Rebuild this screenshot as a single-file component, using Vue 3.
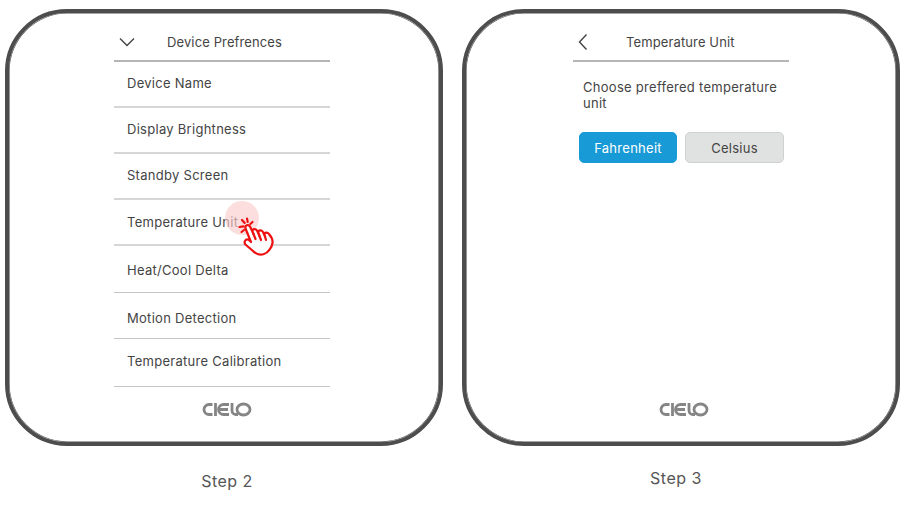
<template>
  <div class="page">
    <section class="step">
      <div class="device">
        <div class="screen screen-list">
          <div class="head">
            <svg class="chevron-down" width="16" height="10" viewBox="0 0 16 10"><path d="M1 1.5 L8 8.5 L15 1.5" /></svg>
            <span class="head-title">Device Prefrences</span>
          </div>
          <div
            v-for="row in rows"
            :key="row.label"
            class="row"
            :class="{ soft: row.soft }"
            :style="{ height: row.height + 'px', paddingTop: row.top + 'px' }"
          >{{ row.label }}</div>
          <div class="tap"></div>
          <svg class="hand" width="46" height="46" viewBox="0 0 46 46">
            <g class="rays">
              <path d="M10 8 L12.7 11" />
              <path d="M15 6.5 L15.7 10" />
              <path d="M20.5 10 L18.3 12" />
              <path d="M7.5 15 L11.5 14.3" />
              <path d="M9.5 20 L12 18" />
            </g>
            <path class="palm" d="M19 30 L13.5 16.5 C12.5 13 16.5 12 18 14.5 L21.5 22 L20.5 19.5 C20 17 23.5 16 25 18.5 L27.5 24 L26.5 20.5 C26 18 29.5 17.5 31 20 L33 24.5 L32.5 22.5 C32.5 20 35.5 20 37 22 C39.5 25 41 28 40.5 31 C40 35 36 41 32 42 C28 43.5 24.5 42.5 21 39 L14 33 C11 30.5 13.5 26 17 28 Z" />
            <g class="rays">
              <path d="M21.5 22 L23.5 27" />
              <path d="M27.5 24 L29 28" />
              <path d="M33 24.5 L34 28" />
            </g>
          </svg>
        </div>
        <svg class="logo" width="50" height="15" viewBox="0 0 50 15">
          <path d="M10.5 2.5 H7 A5 5 0 0 0 7 12.5 H10.5" />
          <path d="M13.5 1 V14" />
          <path d="M27 2.5 H21.5 A5 5 0 0 0 21.5 12.5 H27 M17 7.5 H26" />
          <path d="M30 1 V8.5 A4 4 0 0 0 34 12.5 H36" />
          <ellipse cx="41.5" cy="7.5" rx="6.5" ry="5.5" />
        </svg>
      </div>
      <p class="caption caption-left">Step 2</p>
    </section>

    <section class="step">
      <div class="device">
        <div class="screen">
          <div class="head">
            <svg class="chevron-left" width="10" height="18" viewBox="0 0 10 18"><path d="M8.5 1.5 L1.5 9 L8.5 16.5" /></svg>
            <span class="head-title title-unit">Temperature Unit</span>
          </div>
          <p class="prompt">Choose preffered temperature unit</p>
          <div class="choices">
            <button class="choice choice-on">Fahrenheit</button>
            <button class="choice">Celsius</button>
          </div>
        </div>
        <svg class="logo" width="50" height="15" viewBox="0 0 50 15">
          <path d="M10.5 2.5 H7 A5 5 0 0 0 7 12.5 H10.5" />
          <path d="M13.5 1 V14" />
          <path d="M27 2.5 H21.5 A5 5 0 0 0 21.5 12.5 H27 M17 7.5 H26" />
          <path d="M30 1 V8.5 A4 4 0 0 0 34 12.5 H36" />
          <ellipse cx="41.5" cy="7.5" rx="6.5" ry="5.5" />
        </svg>
      </div>
      <p class="caption caption-right">Step 3</p>
    </section>
  </div>
</template>

<script setup>
// rows are not evenly spaced in the design, so each one keeps its own size
const rows = [
  { label: 'Device Name', height: 46, top: 13, soft: true },
  { label: 'Display Brightness', height: 46, top: 13, soft: true },
  { label: 'Standby Screen', height: 46, top: 13, soft: true },
  { label: 'Temperature Unit', height: 46, top: 14, soft: true },
  { label: 'Heat/Cool Delta', height: 47, top: 16 },
  { label: 'Motion Detection', height: 46, top: 17 },
  { label: 'Temperature Calibration', height: 48, top: 14 },
];
</script>

<style>
html,
body {
  margin: 0;
  background: #fff;
}
</style>

<style scoped>
.page {
  display: flex;
  gap: 19px;
  width: 905px;
  height: 519px;
  padding: 9px 0 0 5px;
  box-sizing: border-box;
  overflow: hidden;
  font-family: 'Inter', 'Open Sans', sans-serif;
  font-size: 13px;
  letter-spacing: 0.28px;
  color: #444;
}

.device {
  display: flex;
  flex-direction: column;
  align-items: center;
  width: 438px;
  height: 437px;
  box-sizing: border-box;
  border: 4px solid #4d4d4d;
  border-radius: 62px;
  box-shadow: inset 0 0 0 0.6px #4d4d4d;
}

.screen {
  position: relative;
  width: 216px;
  height: 374px;
}

.screen-list {
  margin-right: 4px;
}

.head {
  display: flex;
  align-items: center;
  height: 49px;
  box-sizing: border-box;
  border-bottom: 2px solid #b5b5b5;
  padding: 11px 0 0 5px;
}

.head-title {
  margin-left: 32px;
  letter-spacing: 0.12px;
}

.title-unit {
  margin-left: 38px;
}

.chevron-down path,
.chevron-left path {
  fill: none;
  stroke: #444;
  stroke-width: 1.4;
}

.row {
  box-sizing: border-box;
  padding-left: 13px;
  line-height: 16px;
  border-bottom: 1px solid #c4c4c4;
}

.soft {
  border-bottom: 2px solid #d6d6d6;
}

.tap {
  position: absolute;
  left: 111px;
  top: 188px;
  width: 34px;
  height: 34px;
  border-radius: 50%;
  background: rgba(250, 205, 205, 0.65);
}

.hand {
  position: absolute;
  left: 118px;
  top: 199px;
}

.rays path,
.palm {
  fill: none;
  stroke: #ee1111;
  stroke-width: 2.2;
  stroke-linecap: round;
  stroke-linejoin: round;
}

.palm {
  fill: #fff;
}

.logo {
  margin: 15px 0 0 6px;
}

.logo path,
.logo ellipse {
  fill: none;
  stroke: #858585;
  stroke-width: 2.8;
}

.prompt {
  margin: 17px 0 0 10px;
  width: 205px;
  line-height: 16px;
}

.choices {
  display: flex;
  gap: 8px;
  margin: 21px 0 0 6px;
}

.choice {
  width: 98px;
  height: 31px;
  padding: 0;
  border: 1px solid #cfd1d1;
  border-radius: 5px;
  background: #e0e1e1;
  color: #444;
  font: inherit;
  letter-spacing: inherit;
}

.choice + .choice {
  width: 99px;
}

.choice-on {
  border-color: #189ad6;
  background: #189ad6;
  color: #fff;
}

.caption {
  margin: 25px 0 0;
  text-align: center;
  font-size: 16px;
  letter-spacing: 0.5px;
  line-height: 20px;
  color: #555;
}

.caption-left {
  margin-left: 6px;
}

.caption-right {
  margin: 22px 10px 0 0;
}
</style>
